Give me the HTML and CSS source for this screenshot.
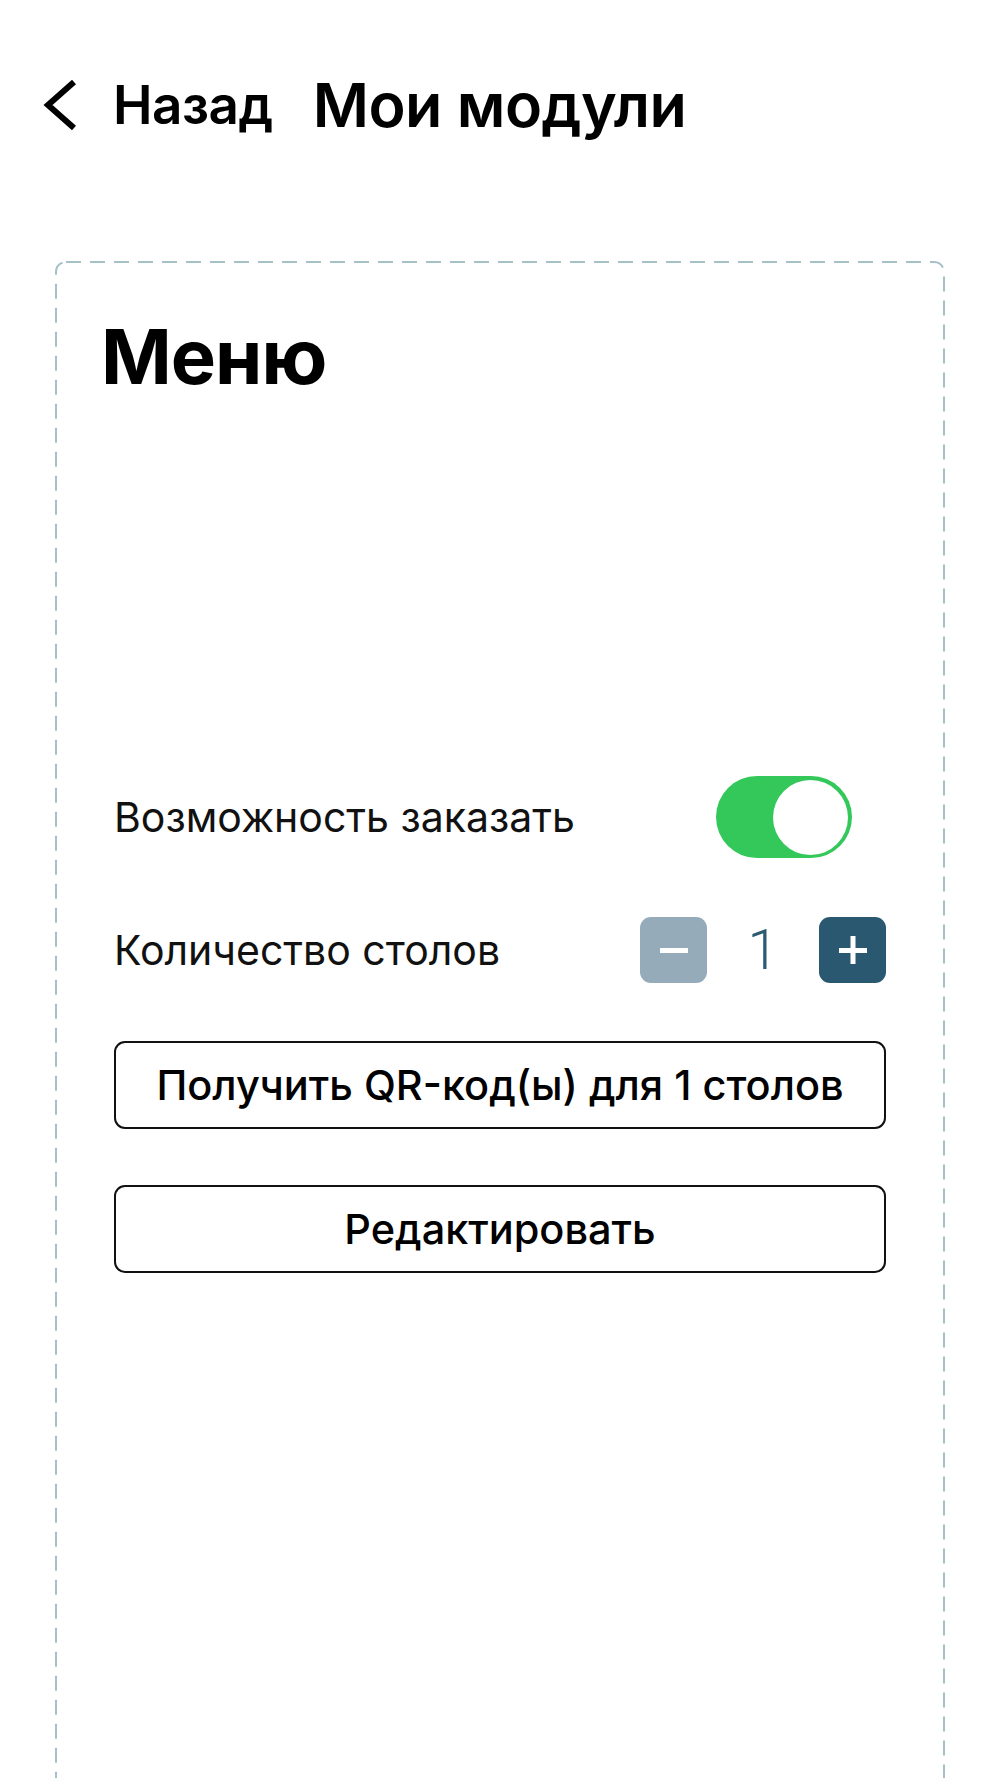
FILE: index.html
```html
<!DOCTYPE html>
<html lang="ru">
<head>
    <meta charset="UTF-8">
    <meta name="viewport" content="width=device-width, initial-scale=1.0">
    <title>Мои модули</title>
    <link rel="stylesheet" href="styles.css">
</head>
<body>
<main class="screen">
    <header class="topBar">
        <a class="backLink" href="#">
            <svg class="backIcon" viewBox="0 0 34 52" width="34" height="52" aria-hidden="true">
                <path d="M31 3 L5 26 L31 49" fill="none" stroke="#000" stroke-width="6" stroke-linecap="butt" stroke-linejoin="miter"/>
            </svg>
            <span class="backText">Назад</span>
        </a>
        <h1 class="pageTitle">Мои модули</h1>
    </header>

    <section class="moduleCard">
        <svg class="moduleBorder" aria-hidden="true">
            <rect x="1" y="1" width="888" height="1530" rx="10" ry="10" fill="none" stroke="#a6c0c7" stroke-width="2" stroke-dasharray="15 9"/>
        </svg>
        <h2 class="moduleTitle">Меню</h2>

        <div class="moduleBody">
            <div class="settingRow">
                <span class="settingLabel">Возможность заказать</span>
                <span class="toggle toggleOn" role="switch" aria-checked="true">
                    <span class="toggleKnob"></span>
                </span>
            </div>

            <div class="settingRow counterRow">
                <span class="settingLabel">Количество столов</span>
                <div class="counter">
                    <button class="counterButton counterMinus" aria-label="Меньше">
                        <svg viewBox="0 0 28 28" width="28" height="28"><rect x="0" y="12" width="28" height="5" fill="#fff"/></svg>
                    </button>
                    <span class="counterValue">1</span>
                    <button class="counterButton counterPlus" aria-label="Больше">
                        <svg viewBox="0 0 28 28" width="28" height="28"><rect x="0" y="12" width="28" height="5" fill="#fff"/><rect x="11.5" y="0" width="5" height="28" fill="#fff"/></svg>
                    </button>
                </div>
            </div>

            <button class="outlineButton">Получить QR-код(ы) для 1 столов</button>
            <button class="outlineButton">Редактировать</button>
        </div>
    </section>
</main>
</body>
</html>
```

FILE: styles.css
```css
* {
    box-sizing: border-box;
    margin: 0;
    padding: 0;
}

body {
    background-color: #fff;
    color: #000;
    font-family: 'Inter', 'Liberation Sans', sans-serif;
    overflow: hidden;
}

.screen {
    width: 1000px;
    height: 1778px;
    overflow: hidden;
}

/* TOP BAR */
.topBar {
    display: flex;
    align-items: center;
    height: 70px;
    margin-top: 70px;
    padding-left: 43px;
}

.backLink {
    display: flex;
    align-items: center;
    color: inherit;
    text-decoration: none;
}

.backIcon {
    display: block;
}

.backText {
    margin-left: 36px;
    font-size: 53px;
    font-weight: 600;
    line-height: 1;
    letter-spacing: -0.5px;
}

.pageTitle {
    margin-left: 40px;
    font-size: 61px;
    font-weight: 600;
    line-height: 1;
    letter-spacing: -0.5px;
}

/* MODULE CARD */
.moduleCard {
    position: relative;
    width: 890px;
    height: 1532px;
    margin: 121px 0 0 55px;
    padding-top: 56px;
}

.moduleBorder {
    position: absolute;
    top: 0;
    left: 0;
    width: 100%;
    height: 100%;
}

.moduleTitle {
    padding-left: 46px;
    font-size: 76px;
    font-weight: 700;
    line-height: 78px;
    letter-spacing: -1px;
}

.moduleBody {
    display: flex;
    flex-direction: column;
    padding: 0 59px;
    margin-top: 381px;
}

.settingRow {
    display: flex;
    align-items: center;
    justify-content: space-between;
    height: 82px;
}

.counterRow {
    height: 66px;
    margin-top: 59px;
}

.settingLabel {
    font-size: 41px;
    font-weight: 400;
    color: #111;
}

/* TOGGLE */
.toggle {
    display: flex;
    align-items: center;
    width: 136px;
    height: 82px;
    margin-right: 34px;
    padding: 0 4px;
    border-radius: 41px;
    background-color: #d5d5d5;
}

.toggleOn {
    justify-content: flex-end;
    background-color: #34c759;
}

.toggleKnob {
    width: 75px;
    height: 75px;
    border-radius: 50%;
    background-color: #fff;
}

/* COUNTER */
.counter {
    display: flex;
    align-items: center;
}

.counterButton {
    display: flex;
    align-items: center;
    justify-content: center;
    width: 67px;
    height: 66px;
    border: none;
    border-radius: 11px;
    cursor: pointer;
}

.counterMinus {
    background-color: #95abb9;
}

.counterPlus {
    background-color: #2b5871;
}

.counterValue {
    width: 112px;
    text-align: center;
    font-family: 'Roboto', 'Liberation Sans', sans-serif;
    font-size: 56px;
    font-weight: 300;
    line-height: 1;
    color: #2b5a72;
}

/* BUTTONS */
.outlineButton {
    height: 88px;
    margin-top: 58px;
    border: 2px solid #111;
    border-radius: 11px;
    background-color: #fff;
    font-family: 'Inter', 'Liberation Sans', sans-serif;
    font-size: 41.5px;
    font-weight: 500;
    color: #000;
    cursor: pointer;
}

.outlineButton + .outlineButton {
    margin-top: 56px;
}
```
